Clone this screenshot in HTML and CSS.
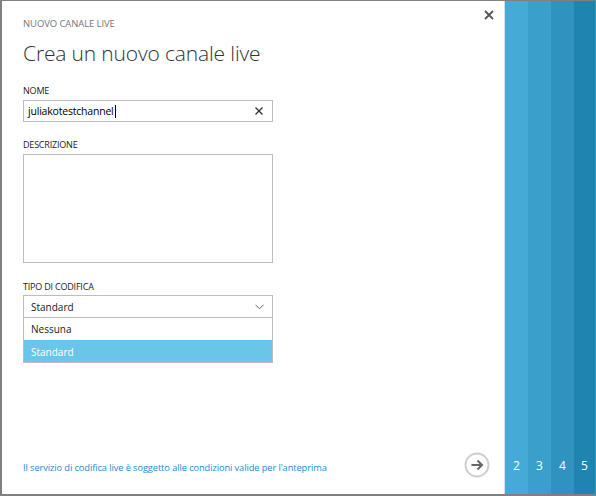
FILE: index.html
```html
<!DOCTYPE html>
<html>
<head>
<meta charset="utf-8">
<link rel="stylesheet" href="styles.css">
</head>
<body>
<div class="frame">
  <div class="main">
    <button class="close" aria-label="Chiudi">
      <svg width="10" height="10" viewBox="0 0 10 10"><path d="M1 1L9 9M9 1L1 9" stroke="#555" stroke-width="1.8"/></svg>
    </button>
    <div class="content">
      <div class="kicker">NUOVO CANALE LIVE</div>
      <h1 class="title">Crea un nuovo canale live</h1>
      <div class="field first">
        <div class="label">NOME</div>
        <div class="input">
          <span class="value">juliakotestchannel<span class="caret"></span></span>
          <svg class="clear" width="8" height="8" viewBox="0 0 8 8"><path d="M0.5 0.5L7.5 7.5M7.5 0.5L0.5 7.5" stroke="#333" stroke-width="1.3"/></svg>
        </div>
      </div>
      <div class="field">
        <div class="label">DESCRIZIONE</div>
        <div class="textarea"></div>
      </div>
      <div class="field encoding">
        <div class="label">TIPO DI CODIFICA</div>
        <div class="select">
          <span>Standard</span>
          <svg width="9" height="6" viewBox="0 0 9 6"><path d="M0.5 0.8L4.5 4.8L8.5 0.8" fill="none" stroke="#666" stroke-width="1"/></svg>
        </div>
        <div class="options">
          <div class="option">Nessuna</div>
          <div class="option selected">Standard</div>
        </div>
      </div>
    </div>
    <div class="footer">
      <a class="link" href="#">Il servizio di codifica live è soggetto alle condizioni valide per l'anteprima</a>
      <button class="next" aria-label="Avanti">
        <svg width="26" height="26" viewBox="0 0 26 26"><circle cx="13" cy="13" r="11.5" fill="none" stroke="#cfcfcf" stroke-width="2"/><path d="M7.5 13H18M13.5 8.5L18 13L13.5 17.5" fill="none" stroke="#666" stroke-width="2"/></svg>
      </button>
    </div>
  </div>
  <div class="steps">
    <div class="step s2"><span>2</span></div>
    <div class="step s3"><span>3</span></div>
    <div class="step s4"><span>4</span></div>
    <div class="step s5"><span>5</span></div>
  </div>
</div>
</body>
</html>
```
FILE: styles.css
```css
* { box-sizing: border-box; }
html, body { margin: 0; padding: 0; }
body {
  width: 596px;
  height: 496px;
  font-family: "Open Sans", "Noto Sans", sans-serif;
  background: #fff;
}
.frame {
  width: 596px;
  height: 496px;
  border: 1px solid #808080;
  border-left-width: 2px;
  border-bottom-width: 2px;
  display: flex;
}
.main {
  flex: 1;
  position: relative;
  display: flex;
  flex-direction: column;
  justify-content: space-between;
  border-right: 1px solid #c8e4f0;
}
.close {
  position: absolute;
  top: 9px;
  right: 10px;
  border: 0;
  background: none;
  padding: 0;
  width: 10px;
  height: 10px;
  display: flex;
}
.content {
  padding: 16px 0 0 21px;
}
.kicker {
  font-size: 9.5px;
  color: #777;
  letter-spacing: -0.1px;
}
.title {
  margin: 9px 0 0;
  font-size: 21px;
  font-weight: 300;
  color: #333;
  letter-spacing: -0.15px;
}
.field { margin-top: 16px; width: 250px; }
.field.first { margin-top: 17px; }
.field.encoding { margin-top: 17px; }
.label {
  font-size: 9px;
  color: #222;
  letter-spacing: -0.2px;
  margin-bottom: 3px;
}
.encoding .label { margin-bottom: 2px; }
.input, .textarea, .select {
  border: 1px solid #bdbdbd;
  background: #fff;
}
.input {
  height: 22px;
  display: flex;
  align-items: center;
  justify-content: space-between;
  padding: 0 9px 0 4px;
}
.value {
  font-size: 10.5px;
  color: #000;
  letter-spacing: -0.2px;
  display: flex;
  align-items: center;
}
.caret {
  width: 1px;
  height: 13px;
  background: #000;
  margin-left: 1px;
}
.textarea { height: 109px; }
.select {
  height: 23px;
  display: flex;
  align-items: center;
  justify-content: space-between;
  padding: 0 8px 0 7px;
  font-size: 10px;
  color: #222;
}
.options {
  border: 1px solid #bdbdbd;
  border-top: 0;
}
.option {
  height: 22px;
  display: flex;
  align-items: center;
  padding: 0 7px;
  font-size: 10px;
  color: #222;
}
.option + .option { border-top: 1px solid #d6d6d6; }
.option.selected {
  background: #6ac5ea;
  color: #fff;
  border-top-color: #6ac5ea;
}
.footer {
  display: flex;
  align-items: center;
  justify-content: space-between;
  padding: 0 14px 16px 21px;
}
.link {
  font-size: 9.3px;
  color: #1f8bd0;
  text-decoration: none;
  letter-spacing: -0.1px;
  padding-top: 5px;
}
.next {
  border: 0;
  background: none;
  padding: 0;
  width: 26px;
  height: 26px;
  display: flex;
}
.steps { display: flex; }
.step {
  width: 23px;
  display: flex;
  align-items: flex-end;
  justify-content: center;
  padding-bottom: 20px;
  color: #fff;
  font-size: 12px;
}
.s5 { width: 21px; }
.s2 { background: #45aad6; }
.s3 { background: #3a9fcb; }
.s4 { background: #2f92bf; }
.s5 { background: #2084b1; }
```
